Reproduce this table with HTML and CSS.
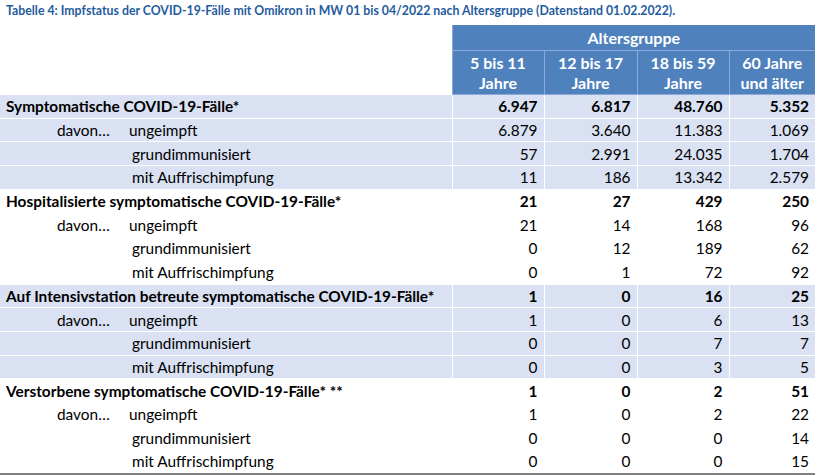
FILE: index.html
```html
<!DOCTYPE html>
<html lang="de">
<head>
<meta charset="utf-8">
<title>Tabelle 4</title>
<link rel="stylesheet" href="styles.css">
</head>
<body>
<div class="caption">Tabelle 4: Impfstatus der COVID-19-Fälle mit Omikron in MW 01 bis 04/2022 nach Altersgruppe (Datenstand 01.02.2022).</div>
<table class="tbl">
  <colgroup>
    <col class="c-label"><col class="c-a"><col class="c-b"><col class="c-c"><col class="c-d">
  </colgroup>
  <thead>
    <tr class="h1">
      <th class="blank" rowspan="2"></th>
      <th class="hd" colspan="4">Altersgruppe</th>
    </tr>
    <tr class="h2">
      <th class="hd">5 bis 11<br>Jahre</th>
      <th class="hd">12 bis 17<br>Jahre</th>
      <th class="hd">18 bis 59<br>Jahre</th>
      <th class="hd">60 Jahre<br>und älter</th>
    </tr>
  </thead>
  <tbody class="band">
    <tr class="grp"><td class="lbl">Symptomatische COVID-19-Fälle*</td><td>6.947</td><td>6.817</td><td>48.760</td><td>5.352</td></tr>
    <tr><td class="lbl"><span class="davon">davon…</span><span class="sub first">ungeimpft</span></td><td>6.879</td><td>3.640</td><td>11.383</td><td>1.069</td></tr>
    <tr><td class="lbl"><span class="sub">grundimmunisiert</span></td><td>57</td><td>2.991</td><td>24.035</td><td>1.704</td></tr>
    <tr><td class="lbl"><span class="sub">mit Auffrischimpfung</span></td><td>11</td><td>186</td><td>13.342</td><td>2.579</td></tr>
  </tbody>
  <tbody>
    <tr class="grp"><td class="lbl">Hospitalisierte symptomatische COVID-19-Fälle*</td><td>21</td><td>27</td><td>429</td><td>250</td></tr>
    <tr><td class="lbl"><span class="davon">davon…</span><span class="sub first">ungeimpft</span></td><td>21</td><td>14</td><td>168</td><td>96</td></tr>
    <tr><td class="lbl"><span class="sub">grundimmunisiert</span></td><td>0</td><td>12</td><td>189</td><td>62</td></tr>
    <tr><td class="lbl"><span class="sub">mit Auffrischimpfung</span></td><td>0</td><td>1</td><td>72</td><td>92</td></tr>
  </tbody>
  <tbody class="band">
    <tr class="grp"><td class="lbl">Auf Intensivstation betreute symptomatische COVID-19-Fälle*</td><td>1</td><td>0</td><td>16</td><td>25</td></tr>
    <tr><td class="lbl"><span class="davon">davon…</span><span class="sub first">ungeimpft</span></td><td>1</td><td>0</td><td>6</td><td>13</td></tr>
    <tr><td class="lbl"><span class="sub">grundimmunisiert</span></td><td>0</td><td>0</td><td>7</td><td>7</td></tr>
    <tr><td class="lbl"><span class="sub">mit Auffrischimpfung</span></td><td>0</td><td>0</td><td>3</td><td>5</td></tr>
  </tbody>
  <tbody class="last">
    <tr class="grp"><td class="lbl">Verstorbene symptomatische COVID-19-Fälle* **</td><td>1</td><td>0</td><td>2</td><td>51</td></tr>
    <tr><td class="lbl"><span class="davon">davon…</span><span class="sub first">ungeimpft</span></td><td>1</td><td>0</td><td>2</td><td>22</td></tr>
    <tr><td class="lbl"><span class="sub">grundimmunisiert</span></td><td>0</td><td>0</td><td>0</td><td>14</td></tr>
    <tr class="end"><td class="lbl"><span class="sub">mit Auffrischimpfung</span></td><td>0</td><td>0</td><td>0</td><td>15</td></tr>
  </tbody>
</table>
</body>
</html>
```

FILE: styles.css
```css
html, body {
  margin: 0;
  padding: 0;
  background: #ffffff;
}
body {
  font-family: Lato, "Liberation Sans", sans-serif;
  color: #000000;
}
.caption {
  height: 25px;
  box-sizing: border-box;
  padding: 3px 0 0 6px;
  font-size: 12.3px;
  font-weight: 700;
  line-height: 15px;
  color: #1f5c9e;
  white-space: nowrap;
}
.tbl {
  border-collapse: collapse;
  table-layout: fixed;
  width: 815px;
  font-size: 15.4px;
}
.c-label { width: 452px; }
.c-a { width: 92px; }
.c-b { width: 93px; }
.c-c { width: 92px; }
.c-d { width: 86px; }
.tbl th.blank {
  background: #ffffff;
  border: 0;
  padding: 0;
}
.tbl th.hd {
  background: #4f81bd;
  color: #ffffff;
  font-weight: 700;
  text-align: center;
  border: 1px solid #8eaadb;
  border-top: 0;
  padding: 0;
  font-size: 16px;
}
.tbl tr.h1 th.hd {
  height: 25px;
  line-height: 25px;
  border-right: 0;
}
.tbl tr.h2 th.hd {
  height: 42px;
  line-height: 20px;
  padding-top: 1px;
}
.tbl tr.h2 th.hd:last-child { border-right: 0; }
.tbl td {
  height: 23.7px;
  padding: 0 6px 0 0;
  box-sizing: border-box;
  text-align: right;
  line-height: 20px;
  border: 1px solid #ffffff;
  white-space: nowrap;
}
.tbl td:first-child { border-left: 0; }
.tbl td:last-child { border-right: 0; }
.tbl td.lbl {
  text-align: left;
  padding: 0 0 0 6px;
}
.band td { background: #d9e1f2; }
.grp td { font-weight: 700; }
.davon {
  display: inline-block;
  width: 72px;
  margin-left: 51px;
}
.sub {
  display: inline-block;
  margin-left: 126px;
}
.sub.first { margin-left: 0; }
.end td { border-bottom: 2px solid #808080; }
```
